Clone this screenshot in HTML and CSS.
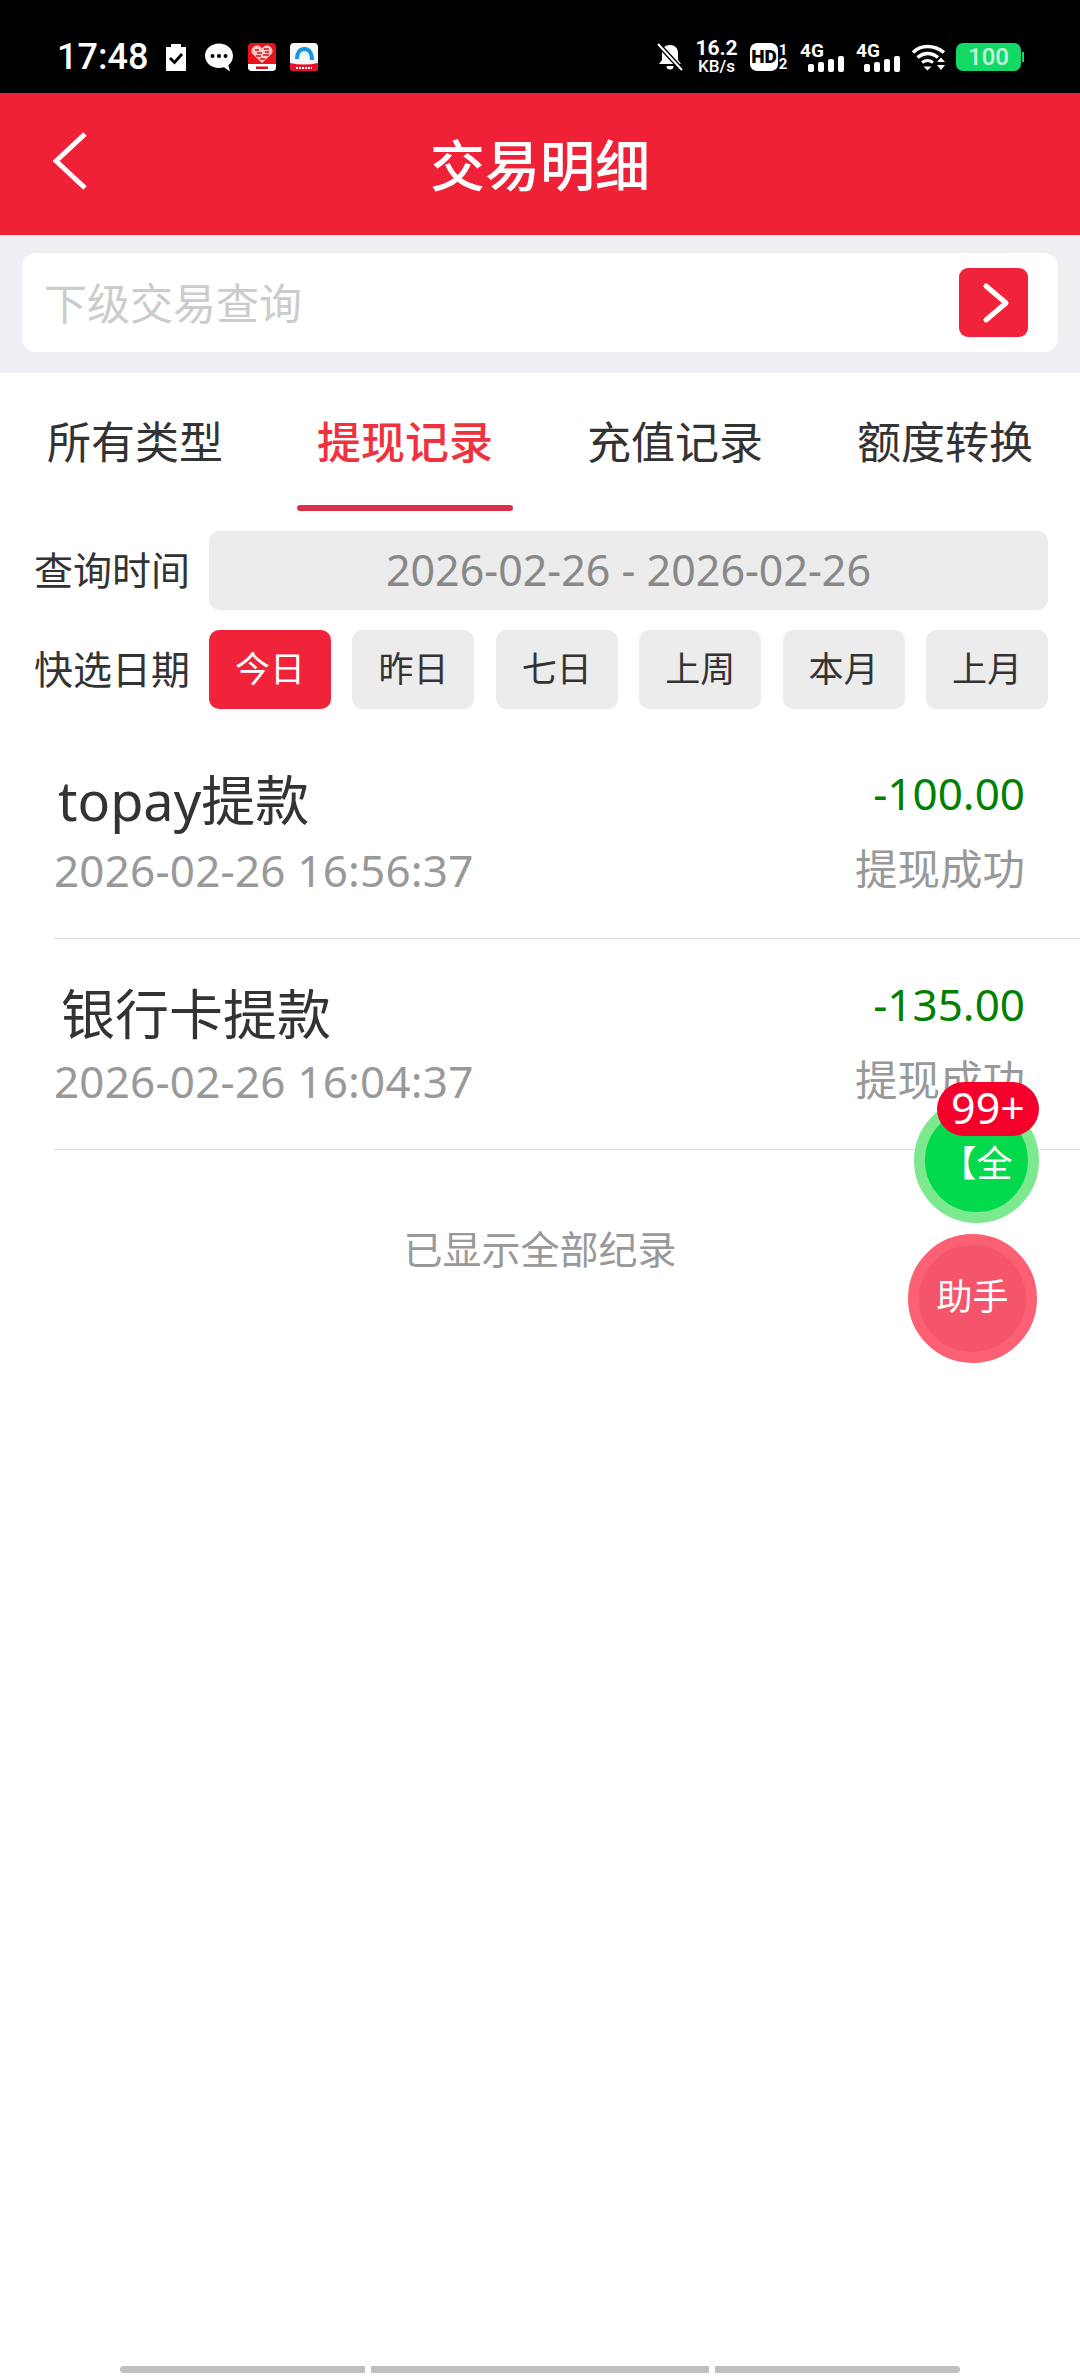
FILE: index.html
```html
<!DOCTYPE html>
<html lang="zh-CN">
<head>
    <meta charset="UTF-8">
    <meta name="viewport" content="width=device-width, initial-scale=1.0">
    <title>交易明细</title>
    <link rel="stylesheet" href="styles.css">
</head>
<body>
    <div class="page">
        <div class="status-bar">
            <div class="status-left">
                <span class="time">17:48</span>
                <svg class="ic-clip" width="22" height="28" viewBox="0 0 22 28">
                    <path d="M1 4h5V1h10v3h5v24H1z" fill="#fff"/>
                    <path d="M5 15l4.500 4.500L17 11" fill="none" stroke="#000" stroke-width="2.800"/>
                </svg>
                <svg class="ic-chat" width="29" height="29" viewBox="0 0 29 29">
                    <path d="M14 0.500C6.300 0.500 0 5.900 0 12.700S6.300 25 14 25c1.800 0 3.500-.3 5-.8l6 4.300-1.600-6.300c3-2.300 4.600-5.700 4.600-9.500C28 5.900 21.700 0.500 14 0.500z" fill="#fff"/>
                    <circle cx="7.500" cy="13" r="2" fill="#000"/>
                    <circle cx="14" cy="13" r="2" fill="#000"/>
                    <circle cx="20.500" cy="13" r="2" fill="#000"/>
                </svg>
                <svg class="ic-app" width="28" height="28" viewBox="0 0 28 28">
                    <rect width="28" height="28" rx="4" fill="#e8141c"/>
                    <path d="M0 21h28v3a4 4 0 0 1-4 4H4a4 4 0 0 1-4-4z" fill="#fff"/>
                    <path d="M14 20L4 10.500C2 6 6 2 9.500 2.500 11.500 2.700 13 4 14 5.500 15 4 16.500 2.700 18.500 2.500 22 2 26 6 24 10.500z" fill="#f7c9c4"/>
                    <path d="M7 7h4M9 10h5M16 6h5M17 9h4M8 13h5M15 12h6M12 16h5" stroke="#d3121b" stroke-width="1.400"/>
                    <rect x="8" y="23.500" width="12" height="2.500" fill="#d3121b"/>
                </svg>
                <svg class="ic-app" width="28" height="28" viewBox="0 0 28 28">
                    <rect width="28" height="28" rx="4" fill="#f4f6f8"/>
                    <path d="M0 20q14 3 28 0v4a4 4 0 0 1-4 4H4a4 4 0 0 1-4-4z" fill="#e6102c"/>
                    <path d="M7 16C7 9.500 10 6 14.500 6S22 10 22 17" fill="none" stroke="#1495e0" stroke-width="4"/>
                    <path d="M6 25h16" stroke="#fff" stroke-width="2" stroke-dasharray="2 1"/>
                </svg>
            </div>
            <div class="status-right">
                <svg class="ic-bell" width="26" height="28" viewBox="0 0 26 28">
                    <path d="M13 2c-5 0-8 3.500-8 8v7l-3 4h22l-3-4v-7c0-4.500-3-8-8-8z" fill="#fff"/>
                    <path d="M9.500 23a3.500 3.500 0 0 0 7 0z" fill="#fff"/>
                    <path d="M1 1l24 26" stroke="#000" stroke-width="5"/>
                    <path d="M1 1l24 26" stroke="#fff" stroke-width="2"/>
                </svg>
                <div class="speed"><span>16.2</span><span class="speed-unit">KB/s</span></div>
                <div class="hd-group">
                    <span class="hd-box">HD</span>
                    <div class="sim-nums"><span>1</span><span>2</span></div>
                </div>
                <div class="signal">
                    <span class="net">4G</span>
                    <div class="bars"><i class="b1"></i><i class="b2"></i><i class="b3"></i><i class="b4"></i></div>
                </div>
                <div class="signal">
                    <span class="net">4G</span>
                    <div class="bars"><i class="b1"></i><i class="b2"></i><i class="b3"></i><i class="b4"></i></div>
                </div>
                <svg class="ic-wifi" width="34" height="28" viewBox="0 0 34 28">
                    <path d="M1 9.500C5 5.500 10 3.500 15.500 3.500S27 5.500 32 9.500" fill="none" stroke="#fff" stroke-width="3.500"/>
                    <path d="M5.500 14.500C8.500 12 12 10.500 15.500 10.500S23 12 26 14.500" fill="none" stroke="#fff" stroke-width="3.500"/>
                    <path d="M10 19.500c1.700-1.300 3.600-2 5.500-2s3.800.7 5.500 2" fill="none" stroke="#fff" stroke-width="3"/>
                    <path d="M11.500 23.500h8l-4 4z" fill="#fff"/>
                    <path d="M25 19h8l-4-4.500zM25 22h8l-4 5z" fill="#fff"/>
                </svg>
                <div class="battery">
                    <div class="battery-body">100</div>
                    <div class="battery-tip"></div>
                </div>
            </div>
        </div>

        <div class="header">
            <svg class="back" width="36" height="60" viewBox="0 0 36 60">
                <path d="M32 3L3 30l29 27" fill="none" stroke="#fff" stroke-width="5"/>
            </svg>
            <h1 class="title">交易明细</h1>
        </div>

        <div class="search-band">
            <div class="search-box">
                <span class="placeholder">下级交易查询</span>
                <div class="search-btn">
                    <svg width="28" height="42" viewBox="0 0 28 42">
                        <path d="M4 4l20 17L4 38" fill="none" stroke="#fff" stroke-width="5" stroke-linecap="round" stroke-linejoin="round"/>
                    </svg>
                </div>
            </div>
        </div>

        <div class="tabs">
            <div class="tab">所有类型</div>
            <div class="tab active">提现记录</div>
            <div class="tab">充值记录</div>
            <div class="tab">额度转换</div>
        </div>

        <div class="filters">
            <div class="filter-row">
                <span class="filter-label">查询时间</span>
                <div class="date-field">2026-02-26 - 2026-02-26</div>
            </div>
            <div class="filter-row">
                <span class="filter-label">快选日期</span>
                <div class="chips">
                    <span class="chip selected">今日</span>
                    <span class="chip">昨日</span>
                    <span class="chip">七日</span>
                    <span class="chip">上周</span>
                    <span class="chip">本月</span>
                    <span class="chip">上月</span>
                </div>
            </div>
        </div>

        <div class="list">
            <div class="row">
                <div class="row-left">
                    <div class="row-title">topay提款</div>
                    <div class="row-date">2026-02-26 16:56:37</div>
                </div>
                <div class="row-right">
                    <div class="amount">-100.00</div>
                    <div class="state">提现成功</div>
                </div>
            </div>
            <div class="row second">
                <div class="row-left">
                    <div class="row-title">银行卡提款</div>
                    <div class="row-date">2026-02-26 16:04:37</div>
                </div>
                <div class="row-right">
                    <div class="amount">-135.00</div>
                    <div class="state">提现成功</div>
                </div>
            </div>
        </div>

        <div class="list-end">已显示全部纪录</div>

        <div class="float-btn green">
            <span class="float-text">【全</span>
            <span class="badge">99+</span>
        </div>
        <div class="float-btn pink">
            <span class="float-text">助手</span>
        </div>

        <div class="home-bar">
            <i class="seg seg-a"></i>
            <i class="seg seg-b"></i>
            <i class="seg seg-c"></i>
        </div>
    </div>
</body>
</html>
```

FILE: styles.css
```css
* {
    box-sizing: border-box;
}
body {
    margin: 0;
    padding: 0;
    background-color: #fff;
    font-family: "Noto Sans", "Noto Sans CJK SC", sans-serif;
    color: #333;
}
.page {
    position: relative;
    width: 1080px;
    height: 2376px;
    overflow: hidden;
    display: flex;
    flex-direction: column;
}

/* status bar */
.status-bar {
    height: 93px;
    background-color: #000;
    color: #fff;
    display: flex;
    justify-content: space-between;
    align-items: center;
    padding: 21px 56px 0 57px;
}
.status-left,
.status-right {
    display: flex;
    align-items: center;
}
.time {
    font-family: Roboto, sans-serif;
    font-size: 36px;
    font-weight: 500;
    width: 108px;
}
.ic-chat {
    margin-left: 18px;
}
.ic-app {
    margin-left: 14px;
}
.status-right {
    font-family: Roboto, sans-serif;
}
.speed {
    display: flex;
    flex-direction: column;
    align-items: center;
    margin-left: 12px;
    width: 43px;
    font-size: 21px;
    font-weight: 700;
    line-height: 18px;
}
.speed-unit {
    font-size: 17px;
    font-weight: 500;
}
.hd-group {
    display: flex;
    align-items: center;
    margin-left: 12px;
}
.hd-box {
    width: 28px;
    height: 28px;
    border-radius: 7px;
    background-color: #fff;
    color: #000;
    font-size: 19px;
    font-weight: 900;
    line-height: 28px;
    text-align: center;
}
.sim-nums {
    display: flex;
    flex-direction: column;
    align-items: center;
    width: 10px;
    font-size: 15px;
    font-weight: 700;
    line-height: 14px;
}
.signal {
    position: relative;
    width: 44px;
    height: 30px;
    margin-left: 12px;
}
.net {
    display: block;
    font-size: 19px;
    font-weight: 700;
    line-height: 18px;
}
.bars {
    position: absolute;
    right: 0;
    bottom: 0;
    display: flex;
    align-items: flex-end;
    gap: 4px;
}
.bars i {
    width: 6px;
    border-radius: 2px;
    background-color: #fff;
}
.b1 { height: 8px; }
.b2 { height: 10px; }
.b3 { height: 13px; }
.b4 { height: 16px; }
.ic-wifi {
    margin-left: 12px;
}
.battery {
    display: flex;
    align-items: center;
    margin-left: 10px;
}
.battery-body {
    width: 65px;
    height: 28px;
    border-radius: 7px;
    background-color: #12d966;
    color: #c9f7dc;
    font-size: 24px;
    font-weight: 500;
    line-height: 28px;
    text-align: center;
}
.battery-tip {
    width: 2px;
    height: 10px;
    margin-left: 1px;
    background-color: #12d966;
}

/* header */
.header {
    position: relative;
    height: 142px;
    background-color: #ee2137;
    display: flex;
    justify-content: center;
    align-items: center;
}
.back {
    position: absolute;
    left: 53px;
    top: 38px;
}
.title {
    margin: 0;
    color: #fff;
    font-size: 55px;
    font-weight: 500;
    line-height: 1;
}

/* search */
.search-band {
    height: 138px;
    background-color: #eeeef3;
    padding: 18px 22px 21px;
}
.search-box {
    height: 99px;
    background-color: #fff;
    border-radius: 14px;
    display: flex;
    justify-content: space-between;
    align-items: center;
    padding: 0 30px 0 22px;
}
.placeholder {
    color: #ccc;
    font-size: 43px;
    padding-bottom: 2px;
}
.search-btn {
    width: 69px;
    height: 69px;
    padding-left: 4px;
    border-radius: 9px;
    background-color: #f0233b;
    display: flex;
    justify-content: center;
    align-items: center;
}

/* tabs */
.tabs {
    display: flex;
    height: 138px;
}
.tab {
    position: relative;
    width: 270px;
    font-size: 44px;
    line-height: 138px;
    text-align: center;
}
.tab.active {
    color: #f0323f;
    font-weight: 500;
}
.tab.active::after {
    content: "";
    position: absolute;
    left: 27px;
    bottom: 0;
    width: 216px;
    height: 6px;
    border-radius: 3px;
    background-color: #d8304a;
}

/* date filters */
.filters {
    display: flex;
    flex-direction: column;
    gap: 20px;
    padding: 20px 32px 0 34px;
}
.filter-row {
    display: flex;
    align-items: center;
    height: 79px;
}
.filter-label {
    width: 175px;
    padding-bottom: 5px;
    font-size: 39px;
}
.date-field {
    flex: 1;
    height: 79px;
    border-radius: 10px;
    background-color: #ececec;
    color: #888;
    font-size: 43px;
    line-height: 77px;
    text-align: center;
}
.chips {
    flex: 1;
    display: flex;
    justify-content: space-between;
}
.chip {
    width: 122px;
    height: 79px;
    border-radius: 10px;
    background-color: #ececec;
    font-size: 35px;
    line-height: 77px;
    text-align: center;
}
.chip.selected {
    background-color: #f0233b;
    color: #fff;
}

/* records */
.list {
    margin: 19px 0 0 54px;
}
.row {
    height: 211px;
    display: flex;
    justify-content: space-between;
    padding-right: 55px;
    border-bottom: 1px solid #ddd;
}
.row-left {
    padding-top: 38px;
}
.row-title {
    padding-left: 4px;
    font-size: 54px;
    line-height: 68px;
}
.row.second .row-title {
    padding-left: 7px;
    padding-top: 3px;
    margin-bottom: -3px;
}
.row-date {
    color: #999;
    font-size: 44px;
    letter-spacing: 0.2px;
    line-height: 73px;
}
.row-right {
    padding-top: 30px;
    text-align: right;
}
.amount {
    color: #008000;
    font-size: 44px;
    line-height: 70px;
}
.state {
    color: #999;
    font-size: 42.5px;
    line-height: 82px;
}
.list-end {
    margin-top: 69px;
    color: #999;
    font-size: 39px;
    line-height: 60px;
    text-align: center;
}

/* floating buttons */
.float-btn {
    position: absolute;
    border-radius: 50%;
    border-style: solid;
    border-width: 11px;
    display: flex;
    justify-content: center;
    align-items: center;
    color: #fff;
}
.float-btn.green {
    left: 914px;
    top: 1098px;
    width: 125px;
    height: 125px;
    background-color: #03d94d;
    border-color: #7ce98f;
}
.float-btn.pink {
    left: 908px;
    top: 1234px;
    width: 129px;
    height: 129px;
    background-color: #f4556b;
    border-color: #fb6074;
}
.float-text {
    font-size: 36px;
    line-height: 1;
    white-space: nowrap;
}
.pink .float-text {
    margin-bottom: 3px;
}
.green .float-text {
    margin-top: 6px;
}
.badge {
    position: absolute;
    left: 12px;
    top: -27px;
    width: 102px;
    height: 54px;
    border-radius: 27px;
    background-color: #f5002a;
    font-size: 43px;
    line-height: 52px;
    text-align: center;
}

/* gesture bar */
.home-bar {
    margin: auto 120px 3px;
    display: flex;
    gap: 6px;
}
.seg {
    height: 7px;
    background-color: #c0c0c0;
}
.seg-a {
    width: 245px;
    border-radius: 4px 0 0 4px;
}
.seg-b {
    width: 338px;
}
.seg-c {
    width: 245px;
    border-radius: 0 4px 4px 0;
}
```
